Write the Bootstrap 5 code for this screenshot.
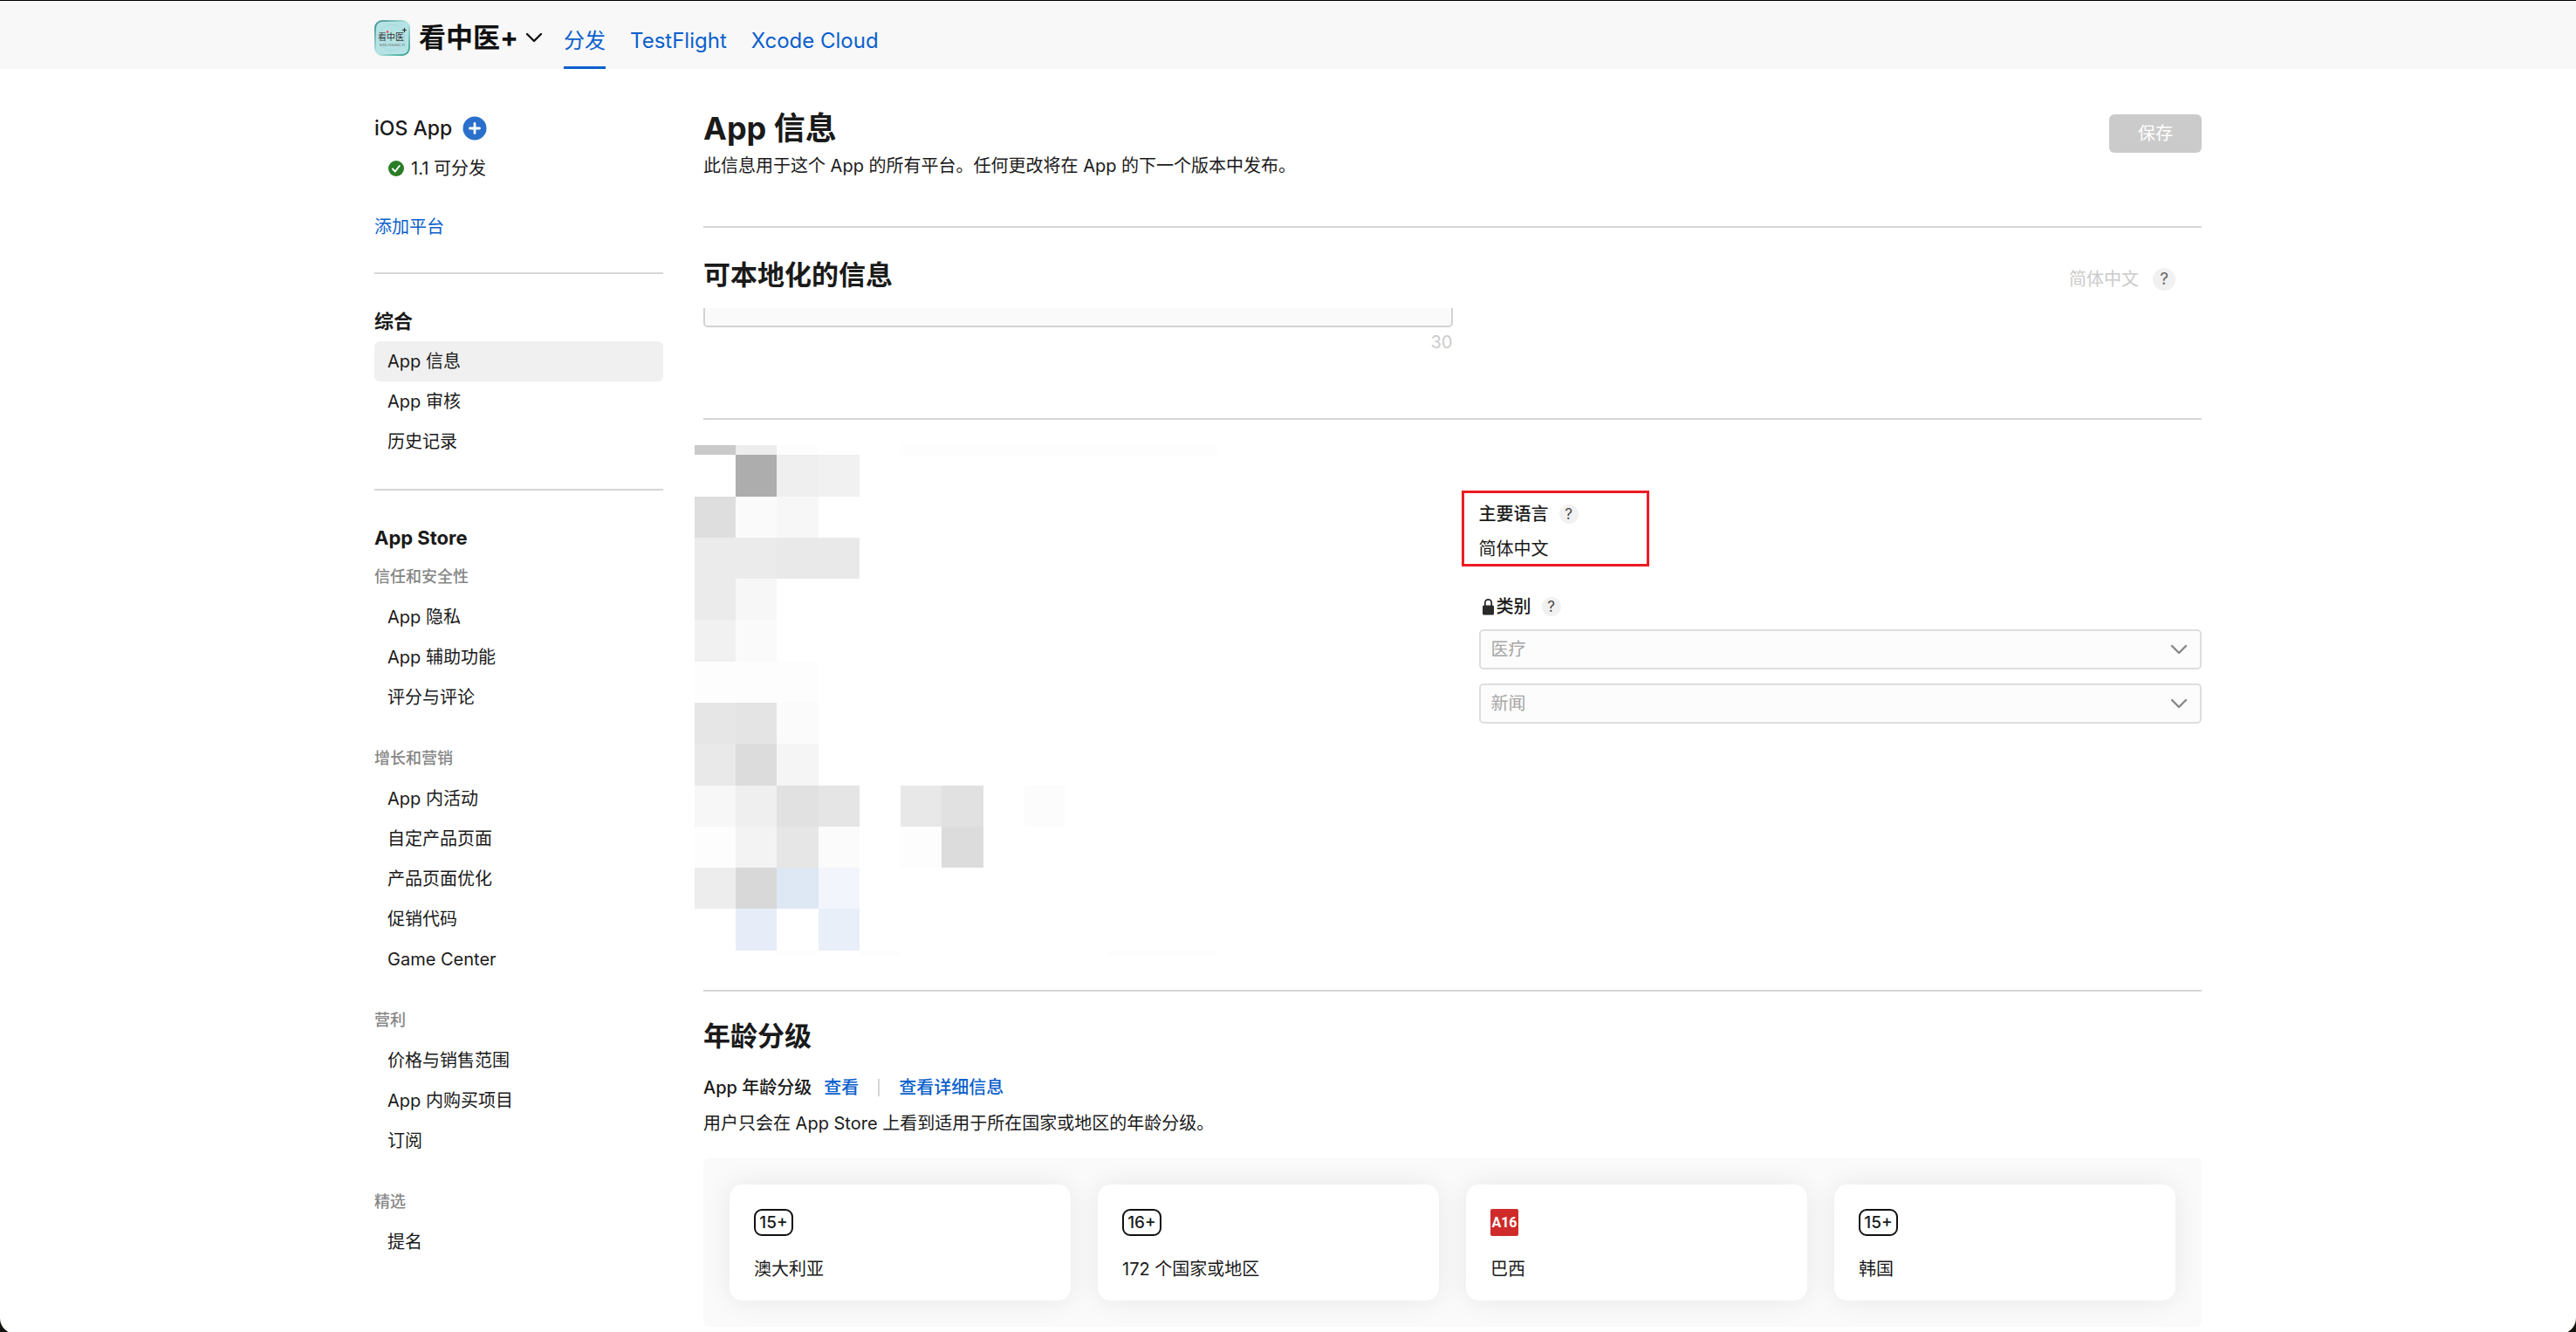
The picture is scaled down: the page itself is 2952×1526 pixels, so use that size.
<!DOCTYPE html>
<html lang="zh-CN">
<head>
<meta charset="utf-8">
<meta name="viewport" content="width=device-width, initial-scale=1">
<title>App 信息</title>
<link href="https://cdn.jsdelivr.net/npm/bootstrap@5.3.0/dist/css/bootstrap.min.css" rel="stylesheet">
<style>
  :root { --ink: #1a1a1a; --blue: #0b5fcc; --rule: #d6d6d6; }
  body { background: #14140c; color: var(--ink); font-family: Inter, "Noto Sans CJK SC", sans-serif; font-size: 20px; line-height: 26px; }
  a { color: var(--blue); text-decoration: none; }
  .window-frame { background: #fff; border-top: 1px solid #000; border-radius: 0 0 18px 18px; min-height: 100vh; }
  .page-wrap { max-width: 2094px; }
  .topbar { background: #f8f8f8; height: 78px; }
  .app-switch { height: 84px; margin-right: 24px; }
  .app-name { font-size: 31px; line-height: 40px; color: #111; margin-left: 10px; }
  .top-tabs { gap: 28px; font-size: 24px; }
  .top-tabs .nav-link { color: var(--blue); padding: 30px 0 0; line-height: 32px; border-bottom: 3px solid transparent; }
  .top-tabs .nav-link.active { border-color: var(--blue); }
  .columns { gap: 46px; }
  .side { width: 331px; padding-top: 54px; }
  .side hr, .rule { border: 0; border-top: 2px solid var(--rule); opacity: 1; margin: 0; }
  .side-title { font-size: 22px; line-height: 30px; }
  .platform-name { font-size: 23px; line-height: 28px; font-weight: 500; }
  .side-group { font-size: 18px; line-height: 47px; color: #868686; font-weight: 500; }
  .side .nav + .side-group { margin-top: 23px; }
  .side .nav-link { color: var(--ink); padding: 10px 15px; line-height: 26px; border-radius: 6px; }
  .side .nav-link.active { background: #f0f0f0; }
  .icon-btn { border: 0; padding: 0; background: none; display: flex; }
  .section-title { font-size: 31px; line-height: 40px; }
  .page-head { padding-top: 46px; height: 180px; }
  .page-title { font-size: 36px; line-height: 44px; }
  .save-btn { width: 106px; height: 44px; font-size: 20px; line-height: 26px; padding: 0; border: 0; border-radius: 6px; margin-top: 6px; }
  .save-btn:disabled { background: #cbcbcb; color: #fff; opacity: 1; }
  .help { border: 0; padding: 0; border-radius: 50%; background: #f1f1f1; color: #444; width: 22px; height: 22px; font-size: 17px; line-height: 22px; margin-left: 12px; }
  .help-lg { width: 26px; height: 26px; font-size: 19px; line-height: 26px; margin-left: 0; color: #666; }
  .faint { color: #cbcbcb; }
  .name-clip { height: 22px; }
  .name-clip .form-control { height: 46px; flex: none; border: 2px solid #d2d2d2; border-radius: 5px; background: #fafafa; }
  .info-col { padding: 66px 0 0 30px; }
  .callout-frame { top: -14px; left: -20px; width: 215px; height: 87px; border: 3px solid #ed1c24; pointer-events: none; }
  .info-col .form-select { height: 46px; padding: 0 44px 0 12px; border: 2px solid #dedede; border-radius: 5px; font-size: 20px; color: #a6a6a6; background-color: #fcfcfc;
    background-image: url("data:image/svg+xml,%3Csvg xmlns='http://www.w3.org/2000/svg' viewBox='0 0 20 12'%3E%3Cpath d='M2 2l8 8 8-8' fill='none' stroke='%23888' stroke-width='2.4' stroke-linecap='round' stroke-linejoin='round'/%3E%3C/svg%3E"); background-size: 20px 12px; background-position: right 14px center; opacity: 1; }
  .mosaic { margin-left: -10px; }
  .divider-bar { width: 2px; height: 20px; background: #d6d6d6; margin: 0 22px; }
  .rating-panel { background: #fafafa; border-radius: 6px; padding: 30px; gap: 31px; }
  .rating-card { flex: 1 1 0; border: 0; border-radius: 15px; padding: 28px 28px 23px; gap: 25px; box-shadow: 0 0 30px rgba(0,0,0,.08); }
  .age-mark { min-width: 45px; height: 31px; border: 2px solid #111; border-radius: 9px; font-size: 19px; line-height: 27px; text-align: center; font-weight: 500; align-self: flex-start; }
  .age-mark-br { width: 32px; height: 31px; border-radius: 2px; background: #cf2b2b; color: #fff; font: 700 16px/31px "Roboto", sans-serif; text-align: center; }
</style>
<script src="https://cdn.jsdelivr.net/npm/bootstrap@5.3.0/dist/js/bootstrap.bundle.min.js"></script>
</head>
<body>
<div class="window-frame overflow-hidden">
  <header class="topbar">
    <div class="page-wrap mx-auto h-100 d-flex">
      <button class="icon-btn app-switch align-items-center" type="button">
        <svg width="41" height="41" viewBox="0 0 41 41" aria-hidden="true">
          <defs><linearGradient id="edge" x1="0" y1="0" x2="1" y2="1"><stop offset="0" stop-color="#3d8f8c"/><stop offset=".5" stop-color="#b9e6e4"/><stop offset="1" stop-color="#2fa08c"/></linearGradient></defs>
          <rect x="1" y="1" width="39" height="39" rx="8" fill="#b5e3e5" stroke="url(#edge)" stroke-width="2"/>
          <circle cx="20" cy="20" r="15" fill="none" stroke="#a3d9dc"/>
          <path d="M20 5v30M8 11l24 18M32 11L8 29" stroke="#a9dcdf" stroke-width=".7"/>
          <text x="19" y="23" font-size="10" text-anchor="middle" fill="#333" font-family="Noto Sans CJK SC, sans-serif">看中医</text>
          <path d="M34.500 9v5M32 11.500h5" stroke="#333" stroke-width="1.200"/>
          <circle cx="15" cy="13.500" r="1.200" fill="#e33"/>
          <text x="20.500" y="30" font-size="4" text-anchor="middle" fill="#666" font-family="Inter, sans-serif">KAN ZHONG YI</text>
        </svg>
        <span class="app-name fw-bold">看中医+</span>
        <svg class="ms-2" width="20" height="12" viewBox="0 0 20 12" aria-hidden="true"><path d="M2 2l8 8 8-8" fill="none" stroke="#111" stroke-width="2.400" stroke-linecap="round" stroke-linejoin="round"/></svg>
      </button>
      <nav class="nav top-tabs" aria-label="App">
        <a class="nav-link active" aria-current="page" href="#">分发</a>
        <a class="nav-link" href="#">TestFlight</a>
        <a class="nav-link" href="#">Xcode Cloud</a>
      </nav>
    </div>
  </header>

  <div class="page-wrap mx-auto d-flex columns">
    <aside class="side flex-shrink-0">
      <div class="d-flex align-items-center">
        <span class="platform-name">iOS App</span>
        <button class="icon-btn ms-2 ps-1" type="button" aria-label="添加">
          <svg width="28" height="28" viewBox="0 0 28 28"><circle cx="14" cy="14" r="13.500" fill="#2a6fcb"/><path d="M14 8.500v11M8.500 14h11" stroke="#fff" stroke-width="2.800" stroke-linecap="round"/></svg>
        </button>
      </div>
      <div class="d-flex align-items-center ms-3" style="margin-top:19px">
        <svg width="18" height="18" viewBox="0 0 18 18" aria-hidden="true"><circle cx="9" cy="9" r="9" fill="#2a7d26"/><path d="M5 9.500l2.800 3L12.800 6" fill="none" stroke="#fff" stroke-width="2" stroke-linecap="round" stroke-linejoin="round"/></svg>
        <span class="ms-2">1.1 可分发</span>
      </div>
      <a class="d-inline-block" href="#" style="margin:41px 0 39px">添加平台</a>
      <hr>
      <h2 class="side-title fw-bold mb-2" style="margin-top:39px">综合</h2>
      <nav class="nav flex-column" aria-label="综合">
        <a class="nav-link active" aria-current="page" href="#">App 信息</a>
        <a class="nav-link" href="#">App 审核</a>
        <a class="nav-link" href="#">历史记录</a>
      </nav>
      <hr style="margin-top:31px">
      <h2 class="side-title fw-bold" style="margin:39px 0 6px">App Store</h2>
      <div class="side-group">信任和安全性</div>
      <nav class="nav flex-column" aria-label="信任和安全性">
        <a class="nav-link" href="#">App 隐私</a>
        <a class="nav-link" href="#">App 辅助功能</a>
        <a class="nav-link" href="#">评分与评论</a>
      </nav>
      <div class="side-group">增长和营销</div>
      <nav class="nav flex-column" aria-label="增长和营销">
        <a class="nav-link" href="#">App 内活动</a>
        <a class="nav-link" href="#">自定产品页面</a>
        <a class="nav-link" href="#">产品页面优化</a>
        <a class="nav-link" href="#">促销代码</a>
        <a class="nav-link" href="#">Game Center</a>
      </nav>
      <div class="side-group">营利</div>
      <nav class="nav flex-column" aria-label="营利">
        <a class="nav-link" href="#">价格与销售范围</a>
        <a class="nav-link" href="#">App 内购买项目</a>
        <a class="nav-link" href="#">订阅</a>
      </nav>
      <div class="side-group">精选</div>
      <nav class="nav flex-column" aria-label="精选">
        <a class="nav-link" href="#">提名</a>
      </nav>
    </aside>

    <main class="flex-grow-1">
      <div class="page-head d-flex justify-content-between align-items-start">
        <div>
          <h1 class="page-title fw-bold mb-2">App 信息</h1>
          <p class="mb-0">此信息用于这个 App 的所有平台。任何更改将在 App 的下一个版本中发布。</p>
        </div>
        <button class="btn save-btn" type="button" disabled>保存</button>
      </div>

      <hr class="rule">
      <section style="padding:34px 0 74px">
        <div class="d-flex justify-content-between align-items-center">
          <h2 class="section-title fw-bold mb-0">可本地化的信息</h2>
          <div class="d-flex align-items-center gap-3" style="margin:10px 30px 0 0">
            <span class="faint">简体中文</span>
            <button class="help help-lg" type="button" aria-label="帮助">?</button>
          </div>
        </div>
        <div class="row gx-0" style="margin-top:18px">
          <div class="col-6">
            <div class="name-clip d-flex align-items-end overflow-hidden">
              <input class="form-control" type="text" aria-label="名称" disabled>
            </div>
            <div class="faint text-end mt-1">30</div>
          </div>
        </div>
      </section>

      <hr class="rule">
      <section class="row gx-0" style="padding:29px 0 40px">
        <div class="col-6">
          <svg class="mosaic d-block" width="600" height="584" viewBox="0 0 600 584" shape-rendering="crispEdges" aria-hidden="true">
            <g fill="#fdfdfd"><path d="M94 0h48v11H94zM236 0h365v11H236zM0 248h142v47H0zM94 579h48v5H94zM189 579h47v5h-47zM474 579h126v5H474zM236 437h47v47h-47zM0 437h47v47H0z"/></g>
            <path fill="#cacaca" d="M0 0h47v11H0z"/><path fill="#ededed" d="M47 0h47v11H47z"/>
            <path fill="#adadad" d="M47 11h47v48H47z"/><path fill="#efefef" d="M94 11h48v48H94z"/><path fill="#f1f1f1" d="M142 11h47v48h-47z"/>
            <path fill="#dedede" d="M0 59h47v47H0z"/><path fill="#fafafa" d="M47 59h47v47H47z"/><path fill="#f7f7f7" d="M94 59h48v47H94z"/>
            <path fill="#ebebeb" d="M0 106h94v47H0z"/><path fill="#e9e9e9" d="M94 106h95v47H94z"/>
            <path fill="#ebebeb" d="M0 153h47v47H0z"/><path fill="#f7f7f7" d="M47 153h47v47H47z"/>
            <path fill="#f1f1f1" d="M0 200h47v48H0z"/><path fill="#fafafa" d="M47 200h47v48H47z"/>
            <path fill="#e6e6e6" d="M0 295h47v47H0z"/><path fill="#e4e4e4" d="M47 295h47v47H47z"/><path fill="#fbfbfb" d="M94 295h48v47H94z"/>
            <path fill="#e9e9e9" d="M0 342h47v48H0z"/><path fill="#dcdcdc" d="M47 342h47v48H47z"/><path fill="#f5f5f5" d="M94 342h48v48H94z"/>
            <path fill="#f7f7f7" d="M0 390h47v47H0z"/><path fill="#efefef" d="M47 390h47v47H47z"/><path fill="#e1e1e1" d="M94 390h48v47H94z"/><path fill="#e5e5e5" d="M142 390h47v47h-47z"/>
            <path fill="#e8e8e8" d="M236 390h47v47h-47z"/><path fill="#e1e1e1" d="M283 390h48v47h-48z"/><path fill="#fcfcfc" d="M378 390h47v47h-47z"/>
            <path fill="#f3f3f3" d="M47 437h47v47H47z"/><path fill="#e6e6e6" d="M94 437h48v47H94z"/><path fill="#fbfbfb" d="M142 437h47v47h-47z"/><path fill="#dcdcdc" d="M283 437h48v47h-48z"/>
            <path fill="#ededed" d="M0 484h47v47H0z"/><path fill="#d8d8d8" d="M47 484h47v47H47z"/><path fill="#dee8f5" d="M94 484h48v47H94z"/><path fill="#f2f5fb" d="M142 484h47v47h-47z"/>
            <path fill="#e6edf8" d="M47 531h47v48H47z"/><path fill="#e8eff8" d="M142 531h47v48h-47z"/>
          </svg>
        </div>
        <div class="col-6 info-col">
          <div class="position-relative">
            <div class="d-flex align-items-center">
              <strong style="font-weight:500">主要语言</strong>
              <button class="help" type="button" aria-label="帮助">?</button>
            </div>
            <div style="margin-top:14px">简体中文</div>
            <div class="callout-frame position-absolute"></div>
          </div>
          <div class="d-flex align-items-center" style="margin:40px 0 13px">
            <svg class="ms-1" width="13" height="20" viewBox="0 0 13 20" aria-hidden="true"><path d="M2.800 9V5.500a3.700 3.700 0 0 1 7.400 0V9" fill="none" stroke="#2a2a2a" stroke-width="1.800"/><rect y="8.500" width="13" height="11" rx="1.500" fill="#2a2a2a"/></svg>
            <label for="cat1" style="font-weight:500;margin-left:3px">类别</label>
            <button class="help" type="button" aria-label="帮助">?</button>
          </div>
          <select class="form-select mb-3" id="cat1" disabled><option>医疗</option></select>
          <select class="form-select" aria-label="次要类别" disabled><option>新闻</option></select>
        </div>
      </section>

      <hr class="rule">
      <section style="padding:31px 0 8px">
        <h2 class="section-title fw-bold" style="margin-bottom:26px">年龄分级</h2>
        <div class="d-flex align-items-center" style="font-weight:500">
          <span>App 年龄分级</span>
          <a href="#" style="margin-left:14px">查看</a>
          <span class="divider-bar"></span>
          <a href="#">查看详细信息</a>
        </div>
        <p style="margin:15px 0 27px">用户只会在 App Store 上看到适用于所在国家或地区的年龄分级。</p>
        <div class="rating-panel d-flex">
          <div class="card rating-card"><span class="age-mark">15+</span><span>澳大利亚</span></div>
          <div class="card rating-card"><span class="age-mark">16+</span><span>172 个国家或地区</span></div>
          <div class="card rating-card"><span class="age-mark-br">A16</span><span>巴西</span></div>
          <div class="card rating-card"><span class="age-mark">15+</span><span>韩国</span></div>
        </div>
      </section>
    </main>
  </div>
</div>
</body>
</html>
